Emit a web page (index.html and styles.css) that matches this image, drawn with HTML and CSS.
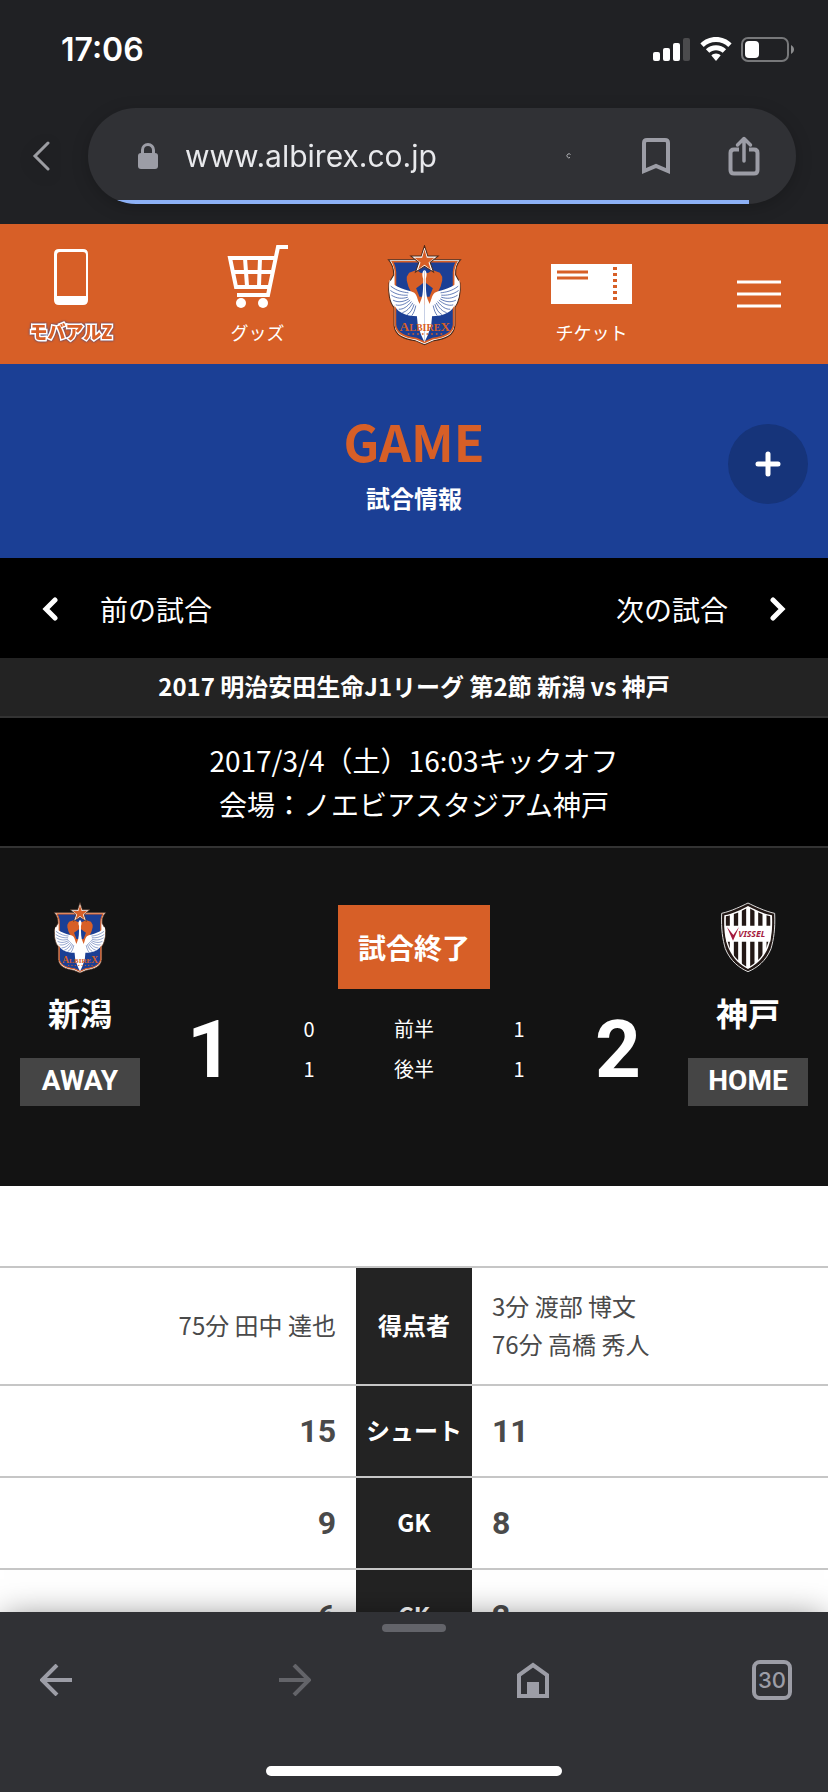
FILE: index.html
```html
<!DOCTYPE html>
<html lang="ja">
<head>
<meta charset="utf-8">
<meta name="viewport" content="width=device-width, initial-scale=1">
<title>試合情報</title>
<link rel="stylesheet" href="styles.css">
</head>
<body>
<svg class="defs" aria-hidden="true">
  <defs>
    <g id="crest-half">
      <path fill="#d75f27" d="M162 112L150 110L138 102L116 110L109 122V133L114 152L122 168L136 192L146 216L162 205V182H147L137 156L162 138Z"/>
      <path fill="#fff" d="M58 131C54 152 58 180 68 200C74 214 82 224 92 229C106 238 124 240 142 240L152 212L144 196C140 184 138 172 128 168C112 162 72 156 58 131Z"/>
      <path fill="none" stroke="#1b3f95" stroke-width="2" d="M61 150C80 165 98 168 114 170M60 163C78 176 96 178 112 177M63 177C80 188 96 188 112 183M68 192C84 200 100 197 115 188M76 206C90 210 104 204 119 192M85 219C98 220 110 212 123 196M96 229C108 226 118 216 127 200M110 235C120 230 126 220 131 204M124 238C130 230 133 222 136 208"/>
      <path fill="#fff" d="M162 102C155 106 154 116 158 128C158 158 158 180 150 195L138 226L142 268L152 296L162 318Z"/>
    </g>
    <symbol id="albirex" viewBox="50 27 224 302">
      <path fill="#fff" stroke="#4a2818" stroke-width="3" d="M54 71H270C258 84 254 98 255 116L268 140C272 170 264 200 253 214V268C250 298 224 308 190 313L162 325L134 313C100 308 74 298 71 268V214C58 200 52 170 56 140L70 116C70 98 66 84 54 71Z"/>
      <path fill="#1b3f95" stroke="#d75f27" stroke-width="5" d="M66 77H258C250 92 248 106 249 120V266C246 292 220 303 186 307L162 318L138 307C104 303 78 292 75 266V120C76 106 74 92 66 77Z"/>
      <use href="#crest-half"/>
      <use href="#crest-half" transform="translate(324 0) scale(-1 1)"/>
      <text class="crest-name" x="163" y="284" text-anchor="middle"><tspan class="crest-cap">A</tspan>LBIRE<tspan class="crest-cap">X</tspan></text>
      <path fill="none" stroke="#d75f27" stroke-width="4" stroke-dasharray="5 9" d="M112 293H216"/>
      <path fill="#fff" stroke="#4a2818" stroke-width="3" d="M162 29L172 60H203L179 79L189 108L162 91L135 108L145 79L121 60H152Z"/>
      <path fill="#d75f27" d="M162 40L169 65H192L174 79L181 100L162 86L143 100L150 79L132 65H155Z"/>
    </symbol>
  </defs>
</svg>

<div class="screen">
  <div class="status">
    <time class="clock">17:06</time>
    <div class="status-icons">
      <svg width="38" height="26" viewBox="0 0 38 26" aria-hidden="true">
        <g fill="#fff"><rect y="15" width="7" height="9" rx="2"/><rect x="10" y="11" width="7" height="13" rx="2"/><rect x="20" y="6" width="7" height="18" rx="2"/></g>
        <rect x="30" y="1" width="7" height="23" rx="2" fill="#4b4b4d"/>
      </svg>
      <svg width="32" height="26" viewBox="0 0 32 26" aria-hidden="true">
        <path fill="#fff" d="M16 0C22 0 27.500 2.400 31.600 6.400L28.300 9.900C25 6.700 20.700 4.900 16 4.900S7 6.700 3.700 9.900L.4 6.400C4.500 2.400 10 0 16 0Z"/>
        <path fill="#fff" d="M16 8.300C19.900 8.300 23.400 9.800 26.100 12.300L22.700 15.700C20.900 14.100 18.600 13.200 16 13.200S11.100 14.100 9.300 15.700L5.900 12.300C8.600 9.800 12.100 8.300 16 8.300Z"/>
        <path fill="#fff" d="M16 16.600C17.800 16.600 19.400 17.300 20.600 18.400L16 24L11.400 18.400C12.600 17.300 14.200 16.600 16 16.600Z"/>
      </svg>
      <svg width="54" height="26" viewBox="0 0 54 26" aria-hidden="true">
        <rect x="1" y="1" width="46" height="23" rx="6" fill="none" stroke="#77787a" stroke-width="2"/>
        <rect x="4" y="4" width="14" height="17" rx="4" fill="#fff"/>
        <path fill="#8b8c8e" d="M50 8C54 10 54 15 50 17Z"/>
      </svg>
    </div>
  </div>

  <div class="toolbar">
    <button class="icon-button back" type="button" aria-label="戻る">
      <svg width="18" height="32" viewBox="0 0 18 32"><path d="M16 3L3 16L16 29" fill="none" stroke="#9c9da2" stroke-width="3" stroke-linecap="round"/></svg>
    </button>
    <div class="omnibox">
      <svg width="20" height="26" viewBox="0 0 20 26" aria-hidden="true"><rect y="10" width="20" height="16" rx="3" fill="#9c9da6"/><path d="M4.500 12V7A5.500 5.500 0 0 1 15.500 7V12" fill="none" stroke="#9c9da6" stroke-width="3"/></svg>
      <input class="url" type="text" value="www.albirex.co.jp" aria-label="アドレス">
      <svg class="spinner" width="6" height="6" viewBox="0 0 6 6" aria-hidden="true"><path d="M4.500 1.500A2 2 0 1 0 4 4.500" fill="none" stroke="#b5b6ba"/></svg>
      <button class="icon-button" type="button" aria-label="ブックマーク">
        <svg width="28" height="36" viewBox="0 0 28 36"><path d="M2 33V5Q2 2 5 2H23Q26 2 26 5V33L14 28Z" fill="none" stroke="#9c9da6" stroke-width="4"/></svg>
      </button>
      <button class="icon-button" type="button" aria-label="共有">
        <svg width="32" height="40" viewBox="0 0 32 40" fill="none" stroke="#9c9da6"><path stroke-width="4" d="M11 13.500H6Q2.500 13.500 2.500 17V34Q2.500 37.500 6 37.500H26Q29.500 37.500 29.500 34V17Q29.500 13.500 26 13.500H21"/><path stroke-width="3.500" stroke-linecap="round" stroke-linejoin="round" d="M16 25V3M9.500 9L16 2.500L22.500 9"/></svg>
      </button>
      <div class="progress"></div>
    </div>
  </div>

  <main class="page">
    <nav class="site-nav" aria-label="サイト">
      <a class="nav-item" href="#mobile">
        <svg width="34" height="58" viewBox="0 0 34 58" aria-hidden="true"><path fill="#fff" fill-rule="evenodd" d="M5 1H29Q34 1 34 6V52Q34 57 29 57H5Q0 57 0 52V6Q0 1 5 1ZM6 4Q3 4 3 7V48H32V7Q32 4 29 4Z"/></svg>
        <span class="mobile-logo">モバアルZ</span>
      </a>
      <a class="nav-item" href="#goods">
        <svg width="62" height="64" viewBox="0 0 62 64" aria-hidden="true">
          <path fill="none" stroke="#fff" stroke-width="4" d="M61 3H51L41 51H10M47 14H3L9 43H43M5 28H44M18 14L20 42M33 14L32 42"/>
          <circle cx="14" cy="59" r="5" fill="#fff"/><circle cx="36" cy="59" r="5" fill="#fff"/>
        </svg>
        <span class="nav-label">グッズ</span>
      </a>
      <a class="nav-crest" href="#top" aria-label="アルビレックス新潟">
        <svg width="75" height="101"><use href="#albirex"/></svg>
      </a>
      <a class="nav-item" href="#ticket">
        <svg width="81" height="44" viewBox="0 0 81 44" aria-hidden="true"><rect width="81" height="40" fill="#fff"/><path d="M6 8H37M6 14H37" stroke="#d75f27" stroke-width="3"/><path d="M64 3V38" stroke="#d75f27" stroke-width="4" stroke-dasharray="3 3"/></svg>
        <span class="nav-label">チケット</span>
      </a>
      <button class="menu-button" type="button" aria-label="メニュー">
        <svg width="44" height="28" viewBox="0 0 44 28"><path d="M0 2H44M0 14H44M0 26H44" stroke="#fff" stroke-width="3"/></svg>
      </button>
    </nav>

    <header class="hero">
      <h1 class="hero-title">GAME</h1>
      <p class="hero-sub">試合情報</p>
      <button class="add-button" type="button" aria-label="開く">
        <svg width="26" height="26" viewBox="0 0 26 26"><path d="M13 3V23M3 13H23" stroke="#fff" stroke-width="5" stroke-linecap="round"/></svg>
      </button>
    </header>

    <nav class="match-nav" aria-label="試合">
      <a class="match-link" href="#prev"><svg width="16" height="24" viewBox="0 0 16 24" aria-hidden="true"><path d="M13 3L4 12L13 21" fill="none" stroke="#fff" stroke-width="5" stroke-linecap="round"/></svg>前の試合</a>
      <a class="match-link" href="#next">次の試合<svg width="16" height="24" viewBox="0 0 16 24" aria-hidden="true"><path d="M3 3L12 12L3 21" fill="none" stroke="#fff" stroke-width="5" stroke-linecap="round"/></svg></a>
    </nav>
    <h2 class="league">2017 明治安田生命J1リーグ 第2節 新潟 vs 神戸</h2>
    <p class="kickoff">2017/3/4（土）16:03キックオフ<br>会場：ノエビアスタジアム神戸</p>

    <section class="score">
      <div class="team">
        <svg width="54" height="72" aria-hidden="true"><use href="#albirex"/></svg>
        <h3 class="team-name">新潟</h3>
        <span class="side">AWAY</span>
      </div>
      <strong class="points">1</strong>
      <div class="result">
        <p class="state">試合終了</p>
        <table class="halves">
          <tr><td>0</td><th>前半</th><td>1</td></tr>
          <tr><td>1</td><th>後半</th><td>1</td></tr>
        </table>
      </div>
      <strong class="points">2</strong>
      <div class="team">
        <svg width="56" height="72" viewBox="917 68 168 216" aria-hidden="true">
          <clipPath id="vissel-shield"><path d="M1001 84C985 95 957 107 934 111C932 150 936 178 945 203C958 236 980 252 1001 265C1023 252 1044 236 1057 203C1067 178 1070 150 1068 111C1046 107 1018 95 1001 84Z"/></clipPath>
          <path fill="#231815" stroke="#ddd" stroke-width="3" d="M1001 71C985 79 950 96 922 102C920 150 925 180 933 208C948 245 975 266 1001 277C1028 266 1055 245 1070 208C1078 180 1083 150 1081 102C1052 96 1017 79 1001 71Z"/>
          <path fill="#fff" d="M1001 80C985 89 955 104 930 108C928 150 932 180 942 205C957 240 980 258 1001 269C1023 258 1046 240 1061 205C1071 180 1075 150 1073 108C1048 104 1018 89 1001 80Z"/>
          <g clip-path="url(#vissel-shield)"><path stroke="#231815" stroke-width="13" d="M940 80V270M965 80V270M989 80V270M1014 80V270M1038 80V270M1063 80V270"/></g>
          <path fill="#fff" d="M931 139H1072L1068 187H936Z"/>
          <path fill="#a4193d" d="M938 143L956 184L974 143L957 167Z"/>
          <text class="vissel-name" x="972" y="174">VISSEL</text>
        </svg>
        <h3 class="team-name">神戸</h3>
        <span class="side">HOME</span>
      </div>
    </section>

    <table class="stats">
      <tr><td class="names">75分 田中 達也</td><th>得点者</th><td class="names">3分 渡部 博文<br>76分 高橋 秀人</td></tr>
      <tr><td>15</td><th>シュート</th><td>11</td></tr>
      <tr><td>9</td><th>GK</th><td>8</td></tr>
      <tr><td>6</td><th>CK</th><td>2</td></tr>
    </table>
  </main>

  <footer class="browser-bar">
    <div class="handle"></div>
    <div class="browser-buttons">
      <button class="icon-button" type="button" aria-label="前のページ"><svg width="32" height="32" viewBox="0 0 32 32"><path d="M32 16H3M17 1L2 16L17 31" fill="none" stroke="#9c9da6" stroke-width="4"/></svg></button>
      <button class="icon-button" type="button" aria-label="次のページ" disabled><svg width="32" height="32" viewBox="0 0 32 32"><path d="M0 16H29M15 1L30 16L15 31" fill="none" stroke="#636469" stroke-width="4"/></svg></button>
      <button class="icon-button" type="button" aria-label="ホーム"><svg width="32" height="36" viewBox="0 0 32 36"><path d="M2 34V13L16 3L30 13V34Z" fill="none" stroke="#9c9da6" stroke-width="4"/><path d="M10 20H22V34H10Z" fill="#9c9da6"/></svg></button>
      <button class="icon-button tabs" type="button" aria-label="タブ 30">30</button>
    </div>
    <div class="home-indicator"></div>
  </footer>
</div>
</body>
</html>
```
FILE: styles.css
```css
* { box-sizing: border-box; }
body, h1, h2, h3, p { margin: 0; }
body {
  font-family: "Noto Sans CJK JP", sans-serif;
  color: #fff;
  background: #202124;
}
.defs { position: absolute; width: 0; height: 0; }
svg { display: block; flex: none; }
a { color: inherit; text-decoration: none; }
button { border: 0; padding: 0; color: inherit; background: none; font: inherit; }
table { border-collapse: collapse; }

.screen { display: flex; flex-direction: column; height: 100vh; overflow: hidden; }

.status {
  display: flex;
  flex: none;
  align-items: center;
  justify-content: space-between;
  height: 100px;
  padding: 0 33px 0 61px;
}
.clock { font: 600 32px/40px Inter, sans-serif; }
.status-icons { display: flex; gap: 9px; }

.toolbar {
  display: flex;
  flex: none;
  height: 124px;
  padding: 8px 32px 20px;
  gap: 38px;
}
.icon-button {
  display: flex;
  flex: none;
  align-items: center;
  justify-content: center;
  width: 40px;
  height: 40px;
}
.back { width: 18px; height: 96px; }
.omnibox {
  position: relative;
  display: flex;
  flex: 1;
  align-items: center;
  overflow: hidden;
  padding: 0 32px 0 50px;
  border-radius: 48px;
  background: #303135;
}
.toolbar { filter: drop-shadow(0 4px 8px rgba(0, 0, 0, .2)); }
.url {
  flex: 1;
  min-width: 0;
  margin-left: 27px;
  padding: 0;
  border: 0;
  outline: 0;
  color: #e8e9ec;
  background: none;
  font: 400 30px/40px Inter, sans-serif;
}
.spinner { margin-right: 64px; }
.omnibox .icon-button + .icon-button { margin-left: 48px; }
.progress {
  position: absolute;
  bottom: 0;
  left: 0;
  width: 93.3%;
  height: 4px;
  background: #8cb0f5;
}

.page { flex: 1; min-height: 0; overflow: hidden; background: #fff; }

.site-nav {
  display: grid;
  grid-template-columns: 142fr 231fr 102fr 233fr 102fr;
  height: 140px;
  padding: 20px 18px 16px 0;
  background: #d75f27;
}
.nav-item {
  display: flex;
  flex-direction: column;
  align-items: center;
  justify-content: flex-end;
}
.nav-label { margin-top: 8px; font-size: 18px; line-height: 32px; }
.mobile-logo {
  margin-top: 8px;
  color: #d75f27;
  font-size: 18px;
  font-weight: 900;
  line-height: 34px;
  -webkit-text-stroke: 3px #fff;
  paint-order: stroke fill;
  filter: drop-shadow(0 0 1px #1b3f95);
}
.nav-crest, .menu-button { display: flex; justify-content: center; }
.nav-crest { padding-top: 1px; }
.menu-button { align-items: center; height: 100px; }
.crest-name { font: 700 30px "Liberation Serif", serif; fill: #d75f27; }
.crest-cap { font-size: 40px; }
.vissel-name { font: italic 700 26px "Noto Sans", sans-serif; fill: #a4193d; }

.hero {
  position: relative;
  height: 194px;
  padding-top: 40px;
  text-align: center;
  background: #1b3f95;
}
.hero-title { color: #d75f27; font-size: 50px; font-weight: 700; line-height: 72px; }
.hero-sub { padding-top: 2px; font-size: 24px; font-weight: 700; line-height: 40px; }
.add-button {
  position: absolute;
  top: 60px;
  right: 20px;
  display: flex;
  align-items: center;
  justify-content: center;
  width: 80px;
  height: 80px;
  border-radius: 50%;
  background: #16347a;
}

.match-nav {
  display: flex;
  align-items: center;
  justify-content: space-between;
  height: 100px;
  padding: 2px 42px 0;
  background: #000;
}
.match-link { display: flex; align-items: center; gap: 42px; font-size: 28px; line-height: 40px; }
.league {
  height: 60px;
  border-bottom: 2px solid #333;
  font-size: 24px;
  font-weight: 700;
  line-height: 56px;
  text-align: center;
  background: #232323;
}
.kickoff {
  padding: 20px 0;
  border-bottom: 2px solid #333;
  font-size: 28px;
  line-height: 44px;
  text-align: center;
  background: #000;
}

.score {
  display: grid;
  grid-template-columns: 120px 1fr 268px 1fr 120px;
  height: 338px;
  padding: 54px 20px 0;
  background: #131313;
}
.team { display: flex; flex-direction: column; align-items: center; }
.team-name { margin-top: 14px; font-size: 32px; font-weight: 700; line-height: 48px; }
.side {
  width: 120px;
  height: 48px;
  margin-top: 22px;
  font: 700 28px/46px Roboto, sans-serif;
  text-align: center;
  background: #454545;
}
.points {
  padding-top: 101px;
  font: 700 80px/94px Roboto, sans-serif;
  text-align: center;
}
.result { padding-top: 3px; }
.state {
  width: 152px;
  margin: 0 auto 20px;
  font-size: 28px;
  font-weight: 700;
  line-height: 84px;
  text-align: center;
  background: #d75f27;
}
.halves { width: 100%; table-layout: fixed; font-size: 20px; line-height: 40px; text-align: center; }
.halves th { width: 152px; padding: 0; font-weight: 400; }
.halves td { padding: 0; }

.stats { width: 100%; margin-top: 80px; table-layout: fixed; }
.stats td, .stats th { height: 92px; border-top: 2px solid #c6c6c6; }
.stats th {
  width: 116px;
  padding: 0 0 3px;
  font-size: 24px;
  font-weight: 700;
  background: #232323;
}
.stats td {
  padding: 0 20px;
  color: #4a4a4a;
  font: 700 32px/38px Roboto, sans-serif;
}
.stats td:first-child { text-align: right; }
.stats .names {
  height: 118px;
  padding-bottom: 3px;
  font: 400 24px/38px "Noto Sans CJK JP", sans-serif;
}

.browser-bar {
  position: relative;
  display: flex;
  flex: none;
  flex-direction: column;
  align-items: center;
  height: 180px;
  padding: 12px 36px 16px;
  background: #303135;
  box-shadow: 0 2px 32px -4px rgba(0, 0, 0, .5);
}
.handle { width: 64px; height: 8px; border-radius: 4px; background: #63646a; }
.browser-buttons { display: flex; justify-content: space-between; width: 100%; margin-top: 28px; }
.tabs {
  border: 4px solid #9c9da6;
  border-radius: 8px;
  color: #9c9da6;
  font: 500 22px/32px Inter, sans-serif;
}
.home-indicator { width: 296px; height: 10px; margin-top: auto; border-radius: 5px; background: #fff; }
```
